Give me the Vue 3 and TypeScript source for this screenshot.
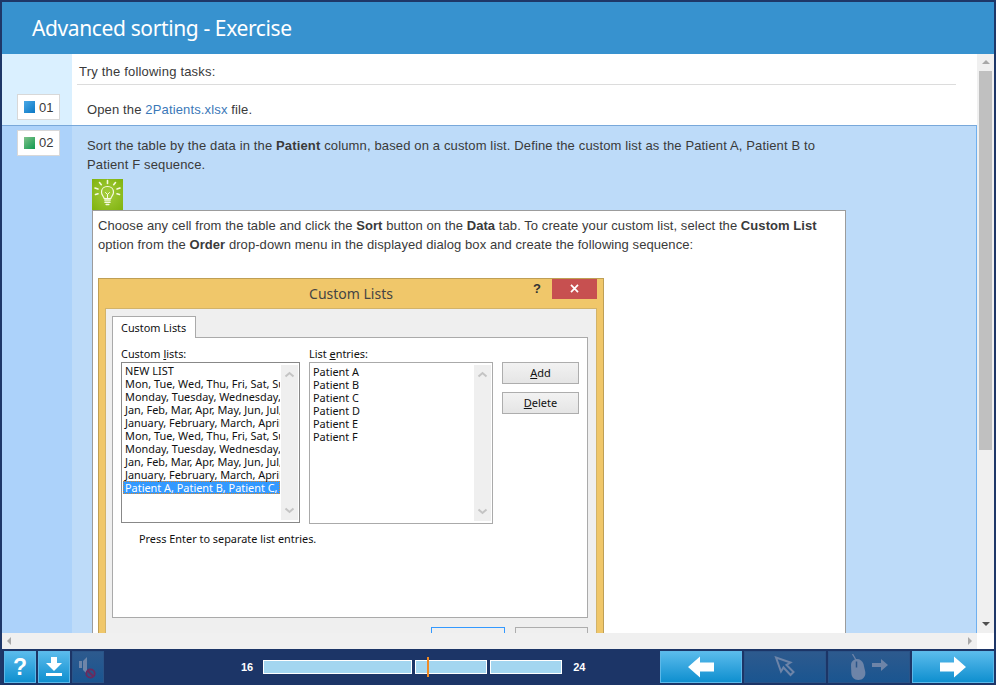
<script setup lang="ts">
const customLists = [
  "NEW LIST",
  "Mon, Tue, Wed, Thu, Fri, Sat, Sun",
  "Monday, Tuesday, Wednesday, Thursday",
  "Jan, Feb, Mar, Apr, May, Jun, Jul, Aug",
  "January, February, March, April, May",
  "Mon, Tue, Wed, Thu, Fri, Sat, Sun",
  "Monday, Tuesday, Wednesday, Thursday",
  "Jan, Feb, Mar, Apr, May, Jun, Jul, Aug",
  "January, February, March, April, May",
];
const entries = ["A", "B", "C", "D", "E", "F"].map((l) => `Patient ${l}`);
</script>

<template>
  <div class="app">
    <header class="title">Advanced sorting - Exercise</header>

    <div class="middle">
      <main class="content">
        <div class="row intro">
          <div class="side"></div>
          <div class="body"><p class="lead">Try the following tasks:</p></div>
        </div>

        <div class="row first">
          <div class="side">
            <div class="badge"><i class="sq blue"></i>01</div>
          </div>
          <div class="body"><p class="task">Open the <a>2Patients.xlsx</a> file.</p></div>
        </div>

        <div class="row active">
          <div class="side">
            <div class="badge"><i class="sq green"></i>02</div>
          </div>
          <div class="body">
            <p class="task wide">
              Sort the table by the data in the <b>Patient</b> column, based on a custom list. Define the custom list as the Patient A, Patient B to Patient F sequence.
            </p>
            <div class="bulb">
              <svg width="31" height="31" viewBox="0 0 31 31">
                <g fill="none" stroke="#f6fae0" stroke-linecap="round">
                  <path d="M15.5 7.500c-3.600 0-6 2.500-6 5.700 0 2.600 1.800 3.800 2.700 6.300h6.600c.9-2.500 2.700-3.700 2.700-6.300 0-3.200-2.400-5.700-6-5.700z" stroke-width="1.200" />
                  <path d="M13.500 13.500l2 2 2-2M15.500 15.500v4" stroke-width="1" />
                  <path d="M12.800 21h5.400M13 23.200h5M14.200 25.500h2.600" stroke-width="1.600" />
                  <path d="M15.500 1.500v3M7.500 3.500l1.800 2.200M23.500 3.500l-1.800 2.200M3 9l3 1M28 9l-3 1M3.500 15.500l2.500-.7M27.500 15.500l-2.500-.7" stroke-width="1.600" />
                </g>
              </svg>
            </div>
            <div class="hint">
              <p>
                Choose any cell from the table and click the <b>Sort</b> button on the <b>Data</b> tab. To create your custom list, select the <b>Custom List</b> option from the <b>Order</b> drop-down menu in the displayed dialog box and create the following sequence:
              </p>

              <div class="dialog">
                <div class="dlg-title">
                  <span class="dlg-name">Custom Lists</span>
                  <span class="dlg-help">?</span>
                  <span class="dlg-close">
                    <svg width="11" height="9" viewBox="0 0 11 9"><path d="M2 .8l7 7.400M9 .8L2 8.200" stroke="#fff" stroke-width="1.700" fill="none" /></svg>
                  </span>
                </div>
                <div class="dlg-inner">
                  <div class="tab">Custom Lists</div>
                  <div class="panel">
                    <div class="cols">
                      <div class="col col-a">
                        <label>Custom <u>l</u>ists:</label>
                        <div class="listbox lb-a">
                          <div class="items">
                            <div v-for="(item, i) in customLists" :key="i" class="item">{{ item }}</div>
                            <div class="item selected">Patient A, Patient B, Patient C, Patient D</div>
                          </div>
                          <div class="lb-scroll">
                            <svg width="11" height="7" viewBox="0 0 11 7"><path d="M1.500 5.500l4-3.500 4 3.500" fill="none" stroke="#c4c4c4" stroke-width="2" /></svg>
                            <svg width="11" height="7" viewBox="0 0 11 7"><path d="M1.500 1.500l4 3.500 4-3.500" fill="none" stroke="#c4c4c4" stroke-width="2" /></svg>
                          </div>
                        </div>
                      </div>
                      <div class="col col-b">
                        <label>List <u>e</u>ntries:</label>
                        <div class="listbox lb-b">
                          <div class="items pad">
                            <div v-for="e in entries" :key="e" class="item">{{ e }}</div>
                          </div>
                          <div class="lb-scroll">
                            <svg width="11" height="7" viewBox="0 0 11 7"><path d="M1.500 5.500l4-3.500 4 3.500" fill="none" stroke="#c4c4c4" stroke-width="2" /></svg>
                            <svg width="11" height="7" viewBox="0 0 11 7"><path d="M1.500 1.500l4 3.500 4-3.500" fill="none" stroke="#c4c4c4" stroke-width="2" /></svg>
                          </div>
                        </div>
                      </div>
                      <div class="col-c">
                        <button class="win-btn"><u>A</u>dd</button>
                        <button class="win-btn"><u>D</u>elete</button>
                      </div>
                    </div>
                    <p class="note">Press Enter to separate list entries.</p>
                  </div>
                  <div class="dlg-actions">
                    <span class="dlg-btn ok"></span>
                    <span class="dlg-btn"></span>
                  </div>
                </div>
              </div>
            </div>
          </div>
        </div>
      </main>

      <aside class="vscroll">
        <span class="tri up"></span>
        <div class="track"><div class="thumb"></div></div>
        <span class="tri down"></span>
      </aside>
    </div>

    <div class="hscroll">
      <div class="h-track">
        <span class="tri left"></span>
        <span class="tri right"></span>
      </div>
      <div class="corner"></div>
    </div>

    <footer class="bar">
      <div class="tools">
        <button class="btn square help">?</button>
        <button class="btn square">
          <svg width="18" height="20" viewBox="0 0 18 20"><path d="M6 0h6v6h5l-8 8-8-8h5z" fill="#fff" /><rect x="1" y="16" width="16" height="3" fill="#fff" /></svg>
        </button>
        <button class="btn square off">
          <svg width="24" height="26" viewBox="0 0 24 26">
            <path d="M3 7h3v7H3zM7 7l4-4v17l-4-4z" fill="#6e85a8" />
            <circle cx="14.500" cy="19.500" r="4.200" fill="#2a5488" stroke="#6b2a5e" stroke-width="1.800" />
            <path d="M11.500 16.500l6 6" stroke="#6b2a5e" stroke-width="1.800" />
          </svg>
        </button>
      </div>

      <div class="progress">
        <span class="num">16</span>
        <div class="segs">
          <div class="seg s1"></div>
          <div class="seg s2"><i class="marker"></i></div>
          <div class="seg s3"></div>
        </div>
        <span class="num end">24</span>
      </div>

      <div class="nav">
        <button class="btn long">
          <svg width="26" height="22" viewBox="0 0 26 22"><path d="M0 11L12 .5v6h14v9H12v6z" fill="#fff" /></svg>
        </button>
        <button class="btn long off">
          <svg width="22" height="22" viewBox="0 0 22 22"><path d="M2 1.500l5 14 2.500-4 7 7.500 3-3-7-7 4-2.500z" fill="none" stroke="#6d84a8" stroke-width="2" /></svg>
        </button>
        <button class="btn long off">
          <svg width="38" height="26" viewBox="0 0 38 26">
            <path d="M2.500 0l3.500 6" stroke="#6d84a8" stroke-width="1.300" fill="none" />
            <path d="M1 11c0-3.500 3-6 6-6s5.500 2 6.500 5l1.800 8c.6 4.500-2.500 8-7 8s-6.800-3-7-7z" fill="#6d84a8" />
            <path d="M6.500 7.500v6" stroke="#2a5488" stroke-width="1.500" />
            <path d="M22 9h9V5l7 6-7 6v-4h-9z" fill="#6d84a8" />
          </svg>
        </button>
        <button class="btn long">
          <svg width="26" height="22" viewBox="0 0 26 22"><path d="M26 11L14 .5v6H0v9h14v6z" fill="#fff" /></svg>
        </button>
      </div>
    </footer>
  </div>
</template>

<style scoped>
.app {
  box-sizing: border-box;
  width: 996px;
  height: 685px;
  display: flex;
  flex-direction: column;
  border: 2px solid #1e3768;
  border-bottom: 0;
  background: #fff;
  overflow: hidden;
  font-family: "Liberation Sans", Arial, sans-serif;
  color: #3a3a3a;
}

.title {
  flex: none;
  height: 52px;
  padding-left: 30px;
  background: #3792cf;
  color: #fff;
  font: 21px/52px "Noto Sans", sans-serif;
  letter-spacing: -0.38px;
}

.middle {
  flex: 1;
  min-height: 0;
  display: flex;
}

.content {
  flex: 1;
  min-width: 0;
  overflow: hidden;
}

.row {
  display: flex;
}

.side {
  flex: none;
  box-sizing: border-box;
  width: 70px;
  padding-left: 3px;
  background: #daf0ff;
  display: flex;
  justify-content: center;
}

.body {
  flex: 1;
  min-width: 0;
}

.intro .body {
  padding: 11px 21px 0 5px;
}

.lead {
  margin: 0;
  padding: 0 0 5px 2px;
  border-bottom: 1px solid #dcdcdc;
  font-size: 13px;
  line-height: 14px;
  letter-spacing: 0.2px;
}

.first .side {
  padding-top: 9px;
}

.task {
  margin: 0;
  padding: 0 15px;
  font-size: 13px;
  line-height: 19.500px;
  letter-spacing: 0.14px;
}

.first .task {
  padding-top: 15px;
  padding-bottom: 5px;
}

.task a {
  color: #3b78b8;
}

.active {
  background: #bddbf9;
  border-top: 1px solid #78a8da;
  border-right: 1px solid #6fb0f0;
}

.active .side {
  background: #acd2fa;
  padding-top: 4px;
  align-items: flex-start;
}

.active .body {
  padding-top: 10px;
}

.wide {
  width: 745px;
}

.badge {
  box-sizing: border-box;
  width: 43px;
  height: 26px;
  display: flex;
  align-items: center;
  gap: 4px;
  padding-left: 6px;
  background: #fff;
  border: 1px solid #d8d8d8;
  font-size: 13px;
}

.sq {
  width: 11px;
  height: 12px;
}

.sq.blue {
  background: linear-gradient(135deg, #4aa8e6, #0a78c4);
}

.sq.green {
  background: linear-gradient(135deg, #7fc28a, #109a50);
}

.bulb {
  width: 31px;
  height: 31px;
  margin: 4px 0 0 20px;
  background: radial-gradient(circle at 50% 50%, #a4cd3c, #7fb20e);
}

.bulb svg {
  display: block;
}

.hint {
  box-sizing: border-box;
  width: 754px;
  margin-left: 20px;
  border: 1px solid #9c9c9c;
  background: #fff;
  padding: 5px 5px 0;
}

.hint p {
  margin: 0;
  font-size: 13px;
  line-height: 19.500px;
  letter-spacing: 0.07px;
}

.dialog {
  box-sizing: border-box;
  width: 506px;
  margin-top: 23px;
  background: #f0c76a;
  border: 1px solid #bf9f55;
  font-family: "Noto Sans", sans-serif;
  color: #111;
}

.dlg-title {
  height: 29px;
  display: flex;
  align-items: flex-start;
  position: relative;
}

.dlg-name {
  flex: 1;
  text-align: center;
  font-size: 14px;
  line-height: 30px;
  color: #444;
}

.dlg-help {
  position: absolute;
  left: 434px;
  top: 1px;
  font: bold 13px/18px "Liberation Sans", sans-serif;
  color: #333;
}

.dlg-close {
  position: absolute;
  right: 6px;
  top: 0;
  width: 45px;
  height: 20px;
  background: #c75050;
  display: flex;
  align-items: center;
  justify-content: center;
}

.dlg-inner {
  margin: 0 6px;
  border: 1px solid #d2b36a;
  border-bottom: 0;
  background: #efefef;
  padding: 7px 8px 0 6px;
  height: 340px;
}

.tab {
  position: relative;
  z-index: 1;
  box-sizing: border-box;
  width: 84px;
  height: 22px;
  background: #fff;
  border: 1px solid #aaa;
  border-bottom: 0;
  font-size: 10.900px;
  line-height: 21px;
  padding-left: 8px;
}

.panel {
  box-sizing: border-box;
  height: 281px;
  margin-top: -1px;
  background: #fff;
  border: 1px solid #aaa;
  padding: 9px 8px 0 8px;
}

.cols {
  display: flex;
}

.col label {
  display: block;
  font-size: 10.900px;
  line-height: 13px;
  height: 10px;
}

.col-a {
  width: 179px;
  margin-right: 9px;
}

.col-b {
  width: 185px;
  margin-right: 9px;
}

.listbox {
  box-sizing: border-box;
  margin-top: 5px;
  display: flex;
  border: 1px solid #888;
  background: #fff;
}

.lb-a {
  height: 161px;
}

.lb-b {
  height: 162px;
  border-color: #aaa;
}

.items {
  flex: 1;
  min-width: 0;
  overflow: hidden;
  padding: 1px 0 0 1px;
  font-size: 10.900px;
  line-height: 13px;
  white-space: nowrap;
}

.items.pad {
  padding: 2px 0 0 1px;
}

.item {
  padding-left: 2px;
  height: 13px;
}

.selected {
  background: #3399ff;
  color: #fff;
  outline: 1px dotted #d98a30;
  outline-offset: -1px;
}

.lb-scroll {
  flex: none;
  box-sizing: border-box;
  width: 17px;
  margin: 2px 1px;
  padding: 6px 0;
  background: #efefef;
  display: flex;
  flex-direction: column;
  justify-content: space-between;
  align-items: center;
}

.lb-scroll svg {
  display: block;
}

.col-c {
  padding-top: 15px;
  display: flex;
  flex-direction: column;
  gap: 8px;
}

.win-btn {
  box-sizing: border-box;
  width: 77px;
  height: 22px;
  padding: 0;
  border: 1px solid #adadad;
  background: linear-gradient(#f2f2f2, #e5e5e5);
  font: 11px/20px "Noto Sans", sans-serif;
  color: #111;
}

.hint .note {
  margin: 0;
  padding: 7px 0 0 18px;
  font-size: 10.900px;
  line-height: 15px;
  letter-spacing: 0;
}

.dlg-actions {
  display: flex;
  gap: 10px;
  margin: 9px 0 0 319px;
}

.dlg-btn {
  box-sizing: border-box;
  width: 74px;
  height: 22px;
  border: 1px solid #adadad;
  background: #efefef;
}

.dlg-btn.ok {
  border-color: #3399ff;
}

.vscroll {
  flex: none;
  width: 17px;
  background: #f0f0f0;
  display: flex;
  flex-direction: column;
  align-items: center;
}

.track {
  flex: 1;
  width: 100%;
  padding-top: 7px;
}

.thumb {
  width: 13px;
  height: 379px;
  margin: 0 auto;
  background: #c0c0c0;
}

.tri {
  display: block;
  width: 0;
  height: 0;
  flex: none;
}

.tri.up {
  margin-top: 6px;
  border: 4px solid transparent;
  border-top: 0;
  border-bottom: 4px solid #a8a8a8;
}

.tri.down {
  margin-bottom: 7px;
  border: 4px solid transparent;
  border-bottom: 0;
  border-top: 4px solid #505050;
}

.hscroll {
  flex: none;
  height: 16px;
  display: flex;
}

.h-track {
  flex: 1;
  background: #f0f0f0;
  display: flex;
  justify-content: space-between;
  align-items: center;
  padding: 0 5px;
}

.tri.left {
  border: 4px solid transparent;
  border-left: 0;
  border-right: 4px solid #a8a8a8;
}

.tri.right {
  border: 4px solid transparent;
  border-right: 0;
  border-left: 4px solid #a8a8a8;
}

.corner {
  flex: none;
  width: 17px;
  background: #fff;
}

.bar {
  flex: none;
  box-sizing: border-box;
  height: 36px;
  margin: 0 -2px;
  padding: 2px 2px 2px 4px;
  background: #1c3567;
  display: flex;
  align-items: stretch;
}

.tools,
.nav {
  display: flex;
  gap: 2px;
}

.btn {
  box-sizing: border-box;
  padding: 0;
  border: 1px solid #5cb8e8;
  background: linear-gradient(#5abbec, #0f8fcf);
  display: flex;
  align-items: center;
  justify-content: center;
  color: #fff;
}

.btn.off {
  border-color: #2a5488;
  background: linear-gradient(#2d5a8e, #1a5590);
}

.square {
  width: 32px;
}

.long {
  width: 82px;
}

.help {
  font: bold 23px/1 "Liberation Sans", sans-serif;
}

.progress {
  flex: 1;
  display: flex;
  align-items: center;
  padding-left: 137px;
  gap: 10px;
}

.num {
  color: #fff;
  font: bold 11px "Liberation Sans", sans-serif;
}

.num.end {
  margin-left: 1px;
}

.segs {
  display: flex;
  gap: 3px;
}

.seg {
  box-sizing: border-box;
  height: 14px;
  background: #a3d6f0;
  border: 1px solid #fff;
  position: relative;
}

.s1 {
  width: 149px;
}

.s2,
.s3 {
  width: 72px;
}

.marker {
  position: absolute;
  left: 11px;
  top: -4px;
  width: 2px;
  height: 20px;
  background: #f08a24;
}
</style>

<style>
html,
body {
  margin: 0;
  overflow: hidden;
}
</style>
